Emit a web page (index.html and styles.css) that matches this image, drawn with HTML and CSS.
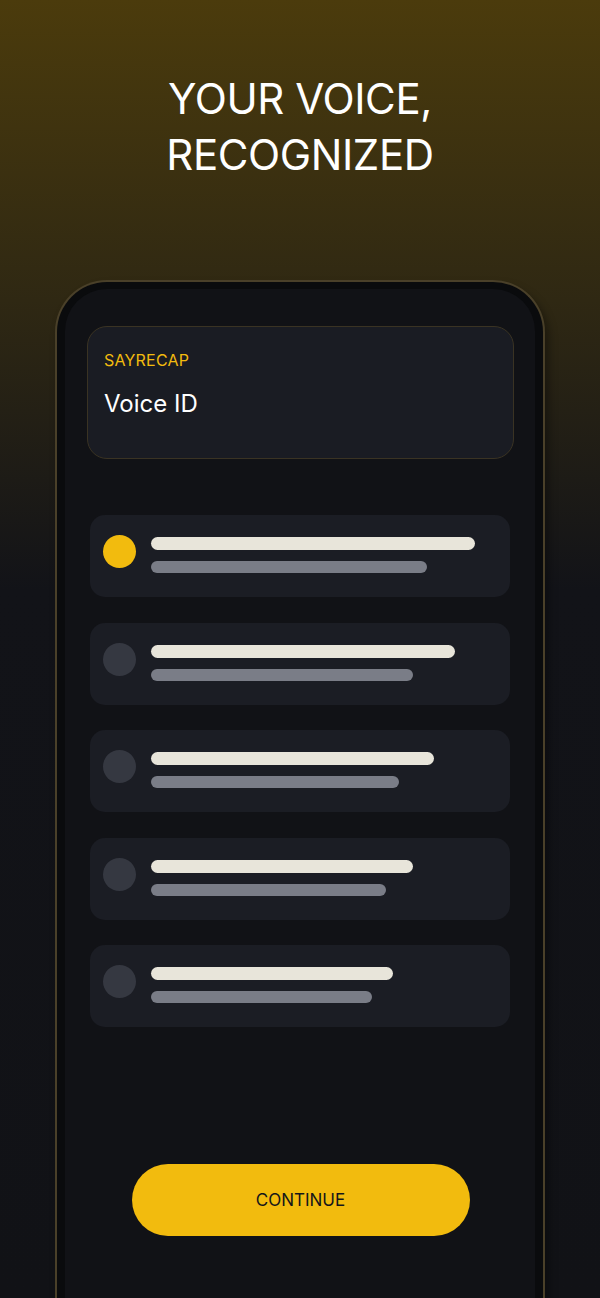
FILE: index.html
```html
<!DOCTYPE html>
<html lang="en">
<head>
<meta charset="utf-8">
<title>Your Voice, Recognized</title>
<link rel="stylesheet" href="styles.css">
</head>
<body>
  <header class="hero">
    <h1 class="hero-title">YOUR VOICE,<br>RECOGNIZED</h1>
  </header>
  <div class="phone">
    <div class="screen">
      <section class="id-card">
        <div class="brand">SAYRECAP</div>
        <div class="card-title">Voice ID</div>
      </section>
      <ul class="options">
        <li class="option">
          <span class="dot dot-active"></span>
          <div class="lines">
            <span class="line line-main" style="width:94%"></span>
            <span class="line line-sub" style="width:80%"></span>
          </div>
        </li>
        <li class="option">
          <span class="dot"></span>
          <div class="lines">
            <span class="line line-main" style="width:88%"></span>
            <span class="line line-sub" style="width:76%"></span>
          </div>
        </li>
        <li class="option">
          <span class="dot"></span>
          <div class="lines">
            <span class="line line-main" style="width:82%"></span>
            <span class="line line-sub" style="width:72%"></span>
          </div>
        </li>
        <li class="option">
          <span class="dot"></span>
          <div class="lines">
            <span class="line line-main" style="width:76%"></span>
            <span class="line line-sub" style="width:68%"></span>
          </div>
        </li>
        <li class="option">
          <span class="dot"></span>
          <div class="lines">
            <span class="line line-main" style="width:70%"></span>
            <span class="line line-sub" style="width:64%"></span>
          </div>
        </li>
      </ul>
      <div class="actions">
        <button class="continue-btn" type="button">CONTINUE</button>
      </div>
    </div>
  </div>
</body>
</html>
```
FILE: styles.css
```css
* { box-sizing: border-box; }

html, body {
  margin: 0;
  padding: 0;
}

body {
  width: 600px;
  height: 1298px;
  overflow: hidden;
  font-family: "Inter", "Liberation Sans", sans-serif;
  background: linear-gradient(180deg, #4b3b0c 0px, #2f2813 300px, #121318 590px, #111216 100%);
  color: #ffffff;
}

.hero {
  padding-top: 71px;
  text-align: center;
}

.hero-title {
  margin: 0;
  font-size: 42px;
  line-height: 56px;
  font-weight: 400;
  color: #ffffff;
  letter-spacing: -0.4px;
}

.phone {
  width: 490px;
  margin: 97px auto 0;
  border: 2px solid #4a4029;
  border-bottom: none;
  border-radius: 52px 52px 0 0;
  background: #0a0b0d;
  padding: 7px 8px 0;
  height: 1018px;
  box-shadow: 4px 6px 8px rgba(0, 0, 0, 0.35);
}

.screen {
  height: 100%;
  background: #111216;
  border-radius: 42px 42px 0 0;
  padding: 37px 21px 0 22px;
}

.id-card {
  height: 133px;
  border: 1px solid #3a3323;
  border-radius: 20px;
  background: #1a1c23;
  padding: 23px 16px 0;
}

.brand {
  font-size: 16px;
  line-height: 20px;
  color: #f2bb0e;
  letter-spacing: 0.2px;
}

.card-title {
  margin-top: 19px;
  font-size: 24px;
  line-height: 30px;
  color: #ffffff;
}

.options {
  list-style: none;
  margin: 56px 0 0;
  padding: 0 4px 0 3px;
  display: flex;
  flex-direction: column;
  gap: 25.5px;
}

.option {
  height: 82px;
  background: #1b1d24;
  border-radius: 15px;
  padding: 20px 14px 0 13px;
  display: flex;
  align-items: flex-start;
}

.dot {
  flex: 0 0 33px;
  width: 33px;
  height: 33px;
  border-radius: 50%;
  background: #353841;
}

.dot-active {
  background: #f2bb0e;
}

.lines {
  flex: 1;
  margin-left: 15px;
  padding-top: 2px;
  display: flex;
  flex-direction: column;
  gap: 11px;
}

.line {
  display: block;
  border-radius: 7px;
}

.line-main {
  height: 13px;
  background: #e8e5da;
}

.line-sub {
  height: 12px;
  background: #7a7d87;
}

.actions {
  margin-top: 137px;
  display: flex;
  justify-content: center;
}

.continue-btn {
  width: 338px;
  height: 72px;
  border: none;
  border-radius: 36px;
  background: #f2bb0e;
  color: #15161a;
  font-family: "Inter", "Liberation Sans", sans-serif;
  font-size: 17px;
  font-weight: 400;
  cursor: pointer;
}
```
